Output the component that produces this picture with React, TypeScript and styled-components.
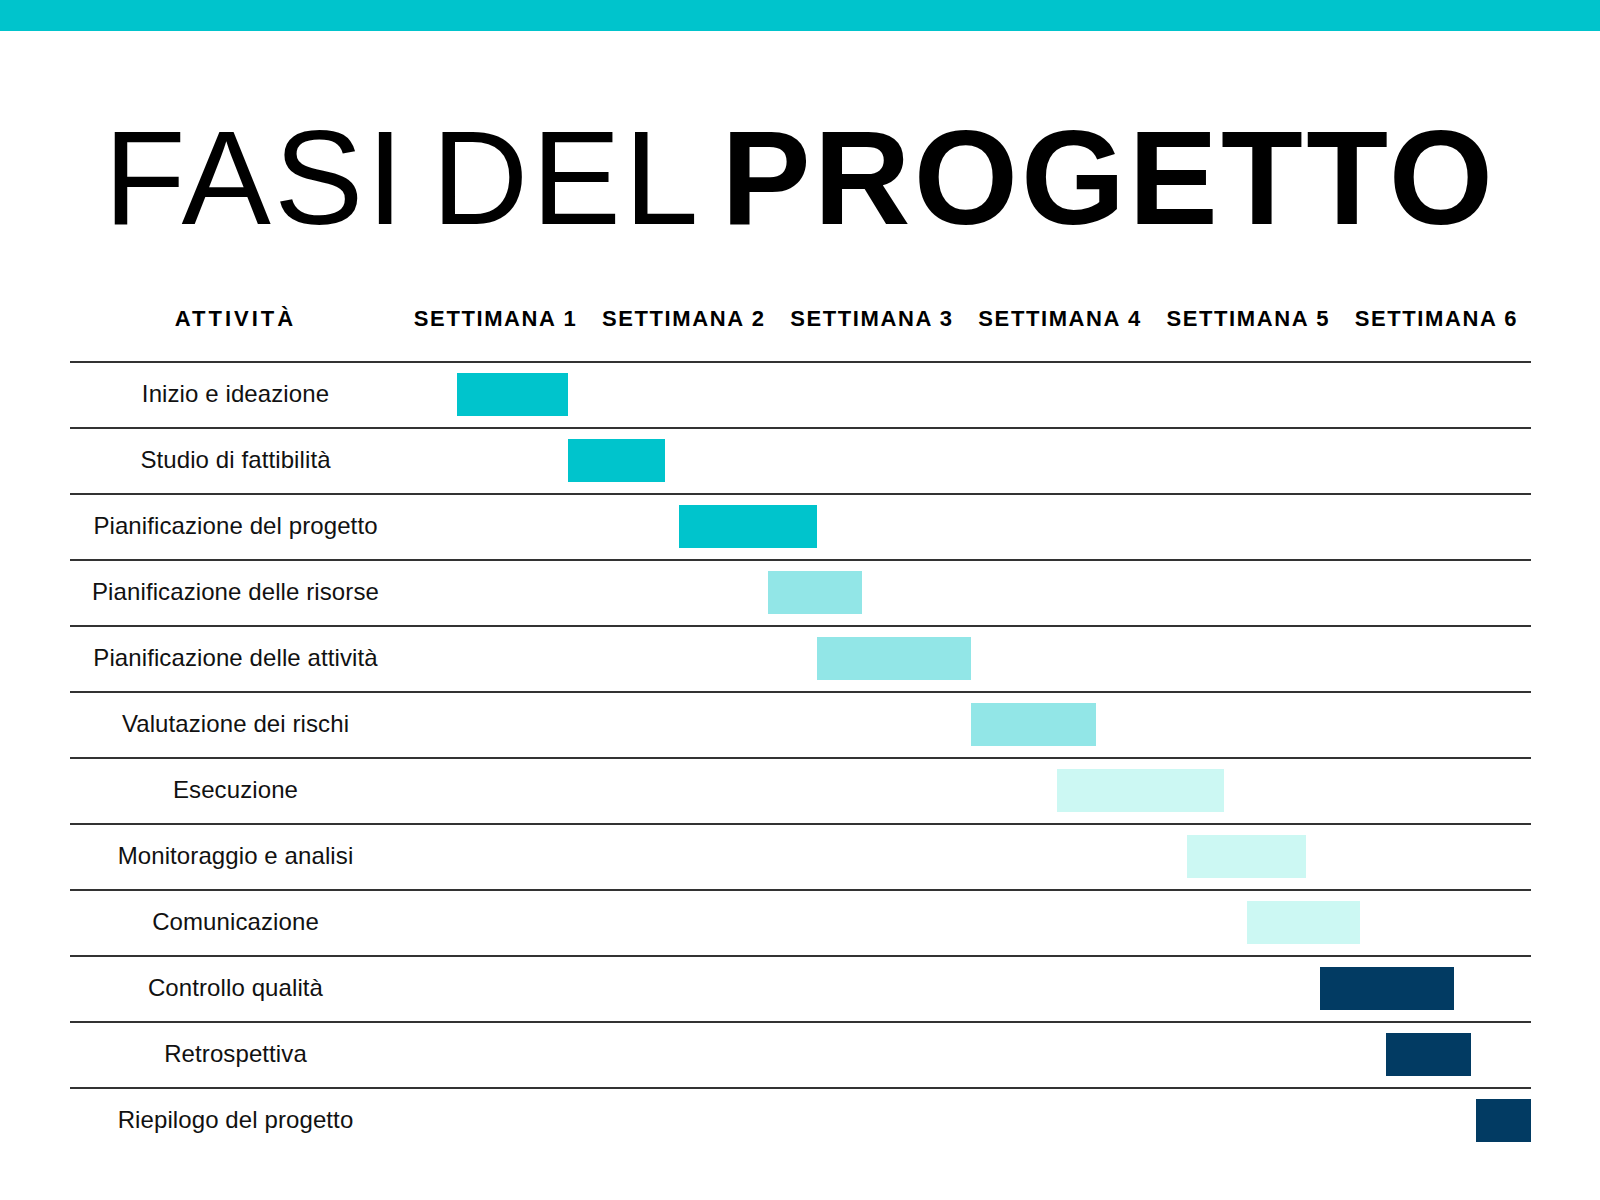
import React from 'react';
import styled, { createGlobalStyle } from 'styled-components';

const GlobalStyle = createGlobalStyle`
    html, body {
        margin: 0;
        padding: 0;
        background: #ffffff;
    }

    body {
        font-family: "Liberation Sans", Arial, sans-serif;
        color: #111111;
    }
`;

const TRACK_WIDTH = 1129;

const COLORS = {
    teal: '#00c4cc',
    light: '#92e6e7',
    pale: '#ccf8f3',
    navy: '#023b63',
};

type Phase = {
    name: string;
    from: number;
    to: number;
    color: string;
};

const phases: Phase[] = [
    { name: 'Inizio e ideazione', from: 55, to: 166, color: COLORS.teal },
    { name: 'Studio di fattibilità', from: 166, to: 263, color: COLORS.teal },
    { name: 'Pianificazione del progetto', from: 277, to: 415, color: COLORS.teal },
    { name: 'Pianificazione delle risorse', from: 366, to: 460, color: COLORS.light },
    { name: 'Pianificazione delle attività', from: 415, to: 569, color: COLORS.light },
    { name: 'Valutazione dei rischi', from: 569, to: 695, color: COLORS.light },
    { name: 'Esecuzione', from: 655, to: 822, color: COLORS.pale },
    { name: 'Monitoraggio e analisi', from: 785, to: 904, color: COLORS.pale },
    { name: 'Comunicazione', from: 845, to: 958, color: COLORS.pale },
    { name: 'Controllo qualità', from: 918, to: 1052, color: COLORS.navy },
    { name: 'Retrospettiva', from: 985, to: 1070, color: COLORS.navy },
    { name: 'Riepilogo del progetto', from: 1074, to: 1129, color: COLORS.navy },
];

const weeks = [1, 2, 3, 4, 5, 6];

const Page = styled.div`
    min-height: 1200px;
    display: flex;
    flex-direction: column;
`;

const TopBar = styled.div`
    height: 31px;
    background: ${COLORS.teal};
`;

const Title = styled.h1`
    margin: 80px 0 0;
    font-size: 134px;
    line-height: 134px;
    font-weight: 400;
    text-align: center;
    color: #000000;
    letter-spacing: 3.2px;
    word-spacing: -16px;
    white-space: nowrap;

    strong {
        font-weight: 700;
    }
`;

const Chart = styled.div`
    width: 1461px;
    margin: 0 auto;
`;

const HeaderRow = styled.div`
    display: grid;
    grid-template-columns: 332px repeat(6, 1fr);
    margin-top: 63px;
    margin-bottom: 31px;
`;

const HeaderCell = styled.div<{ $spacing?: number }>`
    text-align: center;
    font-size: 22px;
    line-height: 22px;
    font-weight: 700;
    letter-spacing: ${p => p.$spacing ?? 1.6}px;
    color: #000000;
    white-space: nowrap;
`;

const Row = styled.div`
    display: grid;
    grid-template-columns: 332px 1fr;
    height: 64px;
    border-top: 2px solid #333333;
`;

const Label = styled.div`
    display: flex;
    align-items: center;
    justify-content: center;
    font-size: 24px;
    line-height: 24px;
    letter-spacing: 0.1px;
    color: #111111;
    white-space: nowrap;
    padding-bottom: 3px;
`;

const Track = styled.div`
    display: flex;
    align-items: center;
`;

const Bar = styled.div<{ $color: string }>`
    height: 43px;
    flex: none;
    margin-bottom: 1px;
    background: ${p => p.$color};
`;

function App() {
    return (
        <Page>
            <GlobalStyle />
            <TopBar />
            <Title>
                FASI DEL <strong>PROGETTO</strong>
            </Title>
            <Chart>
                <HeaderRow>
                    <HeaderCell $spacing={3}>ATTIVITÀ</HeaderCell>
                    {weeks.map(week => (
                        <HeaderCell key={week}>SETTIMANA {week}</HeaderCell>
                    ))}
                </HeaderRow>
                {phases.map(phase => (
                    <Row key={phase.name}>
                        <Label>{phase.name}</Label>
                        <Track>
                            <Bar
                                $color={phase.color}
                                style={{
                                    marginLeft: `${(phase.from / TRACK_WIDTH) * 100}%`,
                                    width: `${((phase.to - phase.from) / TRACK_WIDTH) * 100}%`,
                                }}
                            />
                        </Track>
                    </Row>
                ))}
            </Chart>
        </Page>
    );
}

export default App;
